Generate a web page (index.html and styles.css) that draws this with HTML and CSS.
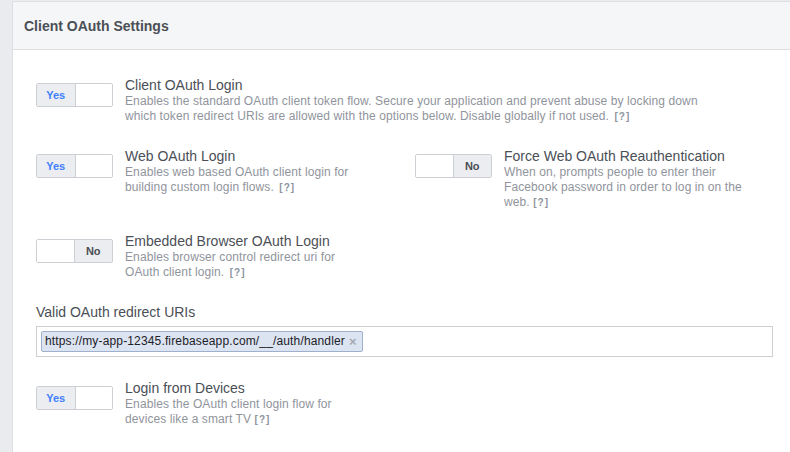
FILE: index.html
```html
<!DOCTYPE html>
<html>
<head>
<meta charset="utf-8">
<link rel="stylesheet" href="styles.css">
</head>
<body>
<div class="card">
  <div class="card-header">Client OAuth Settings</div>
  <div class="card-body">
    <div class="setting row-first">
      <div class="toggle on"><span class="seg seg-yes">Yes</span><span class="seg seg-blank"></span></div>
      <div class="text wide">
        <div class="title">Client OAuth Login</div>
        <div class="desc">Enables the standard OAuth client token flow. Secure your application and prevent abuse by locking down which token redirect URIs are allowed with the options below. Disable globally if not used. <span class="help">[?]</span></div>
      </div>
    </div>

    <div class="pair">
      <div class="setting">
        <div class="toggle on"><span class="seg seg-yes">Yes</span><span class="seg seg-blank"></span></div>
        <div class="text">
          <div class="title">Web OAuth Login</div>
          <div class="desc">Enables web based OAuth client login for building custom login flows. <span class="help">[?]</span></div>
        </div>
      </div>
      <div class="setting">
        <div class="toggle off"><span class="seg seg-blank"></span><span class="seg seg-no">No</span></div>
        <div class="text">
          <div class="title">Force Web OAuth Reauthentication</div>
          <div class="desc">When on, prompts people to enter their Facebook password in order to log in on the web. <span class="help tight">[?]</span></div>
        </div>
      </div>
    </div>

    <div class="setting row-gap">
      <div class="toggle off"><span class="seg seg-blank"></span><span class="seg seg-no">No</span></div>
      <div class="text">
        <div class="title">Embedded Browser OAuth Login</div>
        <div class="desc">Enables browser control redirect uri for OAuth client login. <span class="help">[?]</span></div>
      </div>
    </div>

    <div class="field">
      <div class="field-label">Valid OAuth redirect URIs</div>
      <div class="token-input">
        <span class="token">https://my-app-12345.firebaseapp.com/__/auth/handler<span class="token-x">×</span></span>
      </div>
    </div>

    <div class="setting row-gap">
      <div class="toggle on"><span class="seg seg-yes">Yes</span><span class="seg seg-blank"></span></div>
      <div class="text">
        <div class="title">Login from Devices</div>
        <div class="desc">Enables the OAuth client login flow for devices like a smart TV <span class="help tight">[?]</span></div>
      </div>
    </div>
  </div>
</div>
</body>
</html>
```

FILE: styles.css
```css
html, body {
  margin: 0;
  padding: 0;
}
body {
  background: #e9ebee;
  font-family: "Liberation Sans", Arial, Helvetica, sans-serif;
  color: #4b4f56;
  padding: 1px 0 0 12px;
  height: 451px;
  overflow: hidden;
}
.card {
  background: #fff;
  border: 1px solid #dddfe2;
  border-right: none;
  width: 800px;
  min-height: 460px;
}
.card-header {
  background: #f5f6f7;
  border-bottom: 1px solid #dddfe2;
  height: 47px;
  line-height: 49px;
  padding-left: 11px;
  font-size: 14px;
  font-weight: bold;
  color: #4b4f56;
}
.card-body {
  padding: 26px 0 0 23px;
  width: 737px;
}
.setting {
  display: flex;
  align-items: flex-start;
}
.row-gap {
  margin-top: 22px;
}
.pair {
  display: grid;
  grid-template-columns: 379px 1fr;
  margin-top: 23px;
}
.toggle {
  display: flex;
  width: 75px;
  height: 22px;
  border: 1px solid #ccd0d5;
  border-radius: 2px;
  margin-top: 7px;
  flex: none;
  overflow: hidden;
}
.seg {
  width: 38px;
  height: 22px;
  line-height: 22px;
  text-align: center;
  font-size: 11px;
  font-weight: bold;
}
.seg-blank {
  width: 37px;
  background: #fff;
}
.seg-yes {
  background: #ebedf0;
  color: #4080ff;
  border-right: 1px solid #ccd0d5;
}
.seg-no {
  background: #ebedf0;
  color: #4b4f56;
  border-left: 1px solid #ccd0d5;
}
.text {
  margin-left: 12px;
  width: 240px;
}
.text.wide {
  width: 580px;
}
.title {
  font-size: 14px;
  line-height: 18px;
  color: #4b4f56;
}
.desc {
  font-size: 12px;
  line-height: 15px;
  color: #90949c;
  letter-spacing: 0.1px;
}
.help {
  font-size: 10px;
  line-height: 12px;
  font-weight: bold;
  color: #8d949e;
  margin-left: 2px;
  letter-spacing: 1px;
}
.help.tight {
  margin-left: 0;
}
.field {
  margin-top: 23px;
}
.field-label {
  font-size: 14px;
  line-height: 18px;
  color: #4b4f56;
  margin-bottom: 5px;
}
.token-input {
  border: 1px solid #ccd0d5;
  height: 29px;
  display: flex;
  align-items: center;
  padding-left: 4px;
  background: #fff;
}
.token {
  background: #dce4f1;
  border: 1px solid #9fb0cd;
  border-radius: 2px;
  height: 19px;
  line-height: 19px;
  padding: 0 5px 0 3px;
  font-size: 12px;
  letter-spacing: 0.15px;
  color: #1d2129;
  display: inline-flex;
  align-items: center;
}
.token-x {
  color: #a4a9b3;
  font-weight: bold;
  font-size: 13px;
  margin-left: 4px;
}
```
